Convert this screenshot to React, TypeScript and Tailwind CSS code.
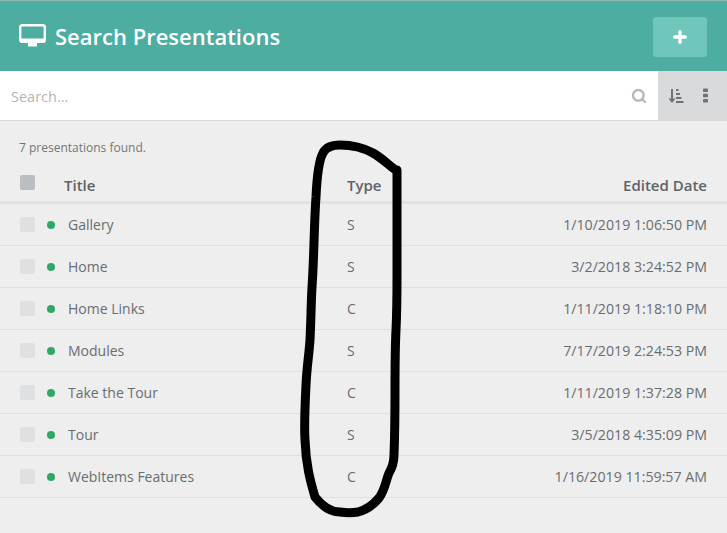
import React from 'react';
import { Plus, Search } from 'lucide-react';

const rows = [
  { title: 'Gallery', type: 'S', date: '1/10/2019 1:06:50 PM' },
  { title: 'Home', type: 'S', date: '3/2/2018 3:24:52 PM' },
  { title: 'Home Links', type: 'C', date: '1/11/2019 1:18:10 PM' },
  { title: 'Modules', type: 'S', date: '7/17/2019 2:24:53 PM' },
  { title: 'Take the Tour', type: 'C', date: '1/11/2019 1:37:28 PM' },
  { title: 'Tour', type: 'S', date: '3/5/2018 4:35:09 PM' },
  { title: 'WebItems Features', type: 'C', date: '1/16/2019 11:59:57 AM' },
];

const App: React.FC = () => {
  return (
    <div className="relative w-[727px] h-[533px] overflow-hidden bg-[#eeeeee] font-['Open_Sans',sans-serif] text-[#666a6d]">
      {/* Header */}
      <div className="h-[71px] bg-[#4cada0] border-t border-[#8fb5b0] flex items-center justify-between pl-[19px] pr-[20px]">
        <div className="flex items-center gap-[10px] text-white">
          <svg width="27" height="24" viewBox="0 0 27 24" fill="none">
            <rect x="1.2" y="1.2" width="24.6" height="16.6" rx="2" stroke="white" strokeWidth="2.4" />
            <rect x="1" y="14.5" width="25" height="4.5" rx="1.5" fill="white" />
            <rect x="9" y="19" width="9" height="3.5" fill="white" />
          </svg>
          <h1 className="text-[22px] font-semibold leading-none ml-[-1px]">Search Presentations</h1>
        </div>
        <button className="w-[54px] h-[40px] rounded-[3px] bg-[#70c6ba] flex items-center justify-center text-white mt-[1px]">
          <Plus size={18} strokeWidth={4.5} />
        </button>
      </div>

      {/* Search bar */}
      <div className="h-[50px] flex bg-white border-b border-[#d8d8d8]">
        <div className="flex-1 flex items-center justify-between pl-[11px] pr-[11px]">
          <span className="text-[14.5px] text-[#b5b5b5] mt-[2px]">Search...</span>
          <Search size={16} strokeWidth={3.5} className="text-[#b8b8b8] mt-[1px]" />
        </div>
        <div className="w-[69px] bg-[#d9dadb] flex items-center gap-[19px] pl-[10px] text-[#6f7274]">
          <svg width="16" height="16" viewBox="0 0 16 16" fill="currentColor">
            <rect x="3" y="1" width="2" height="12" />
            <path d="M0.5 10.5 H7.5 L4 15 Z" />
            <rect x="8" y="1" width="2.5" height="2" />
            <rect x="8" y="5" width="4" height="2" />
            <rect x="8" y="9" width="5.5" height="2" />
            <rect x="8" y="13" width="7.5" height="2" />
          </svg>
          <svg width="5" height="15" viewBox="0 0 5 15" fill="currentColor">
            <rect x="0" y="0.5" width="5" height="3.6" rx="0.8" />
            <rect x="0" y="5.7" width="5" height="3.6" rx="0.8" />
            <rect x="0" y="10.9" width="5" height="3.6" rx="0.8" />
          </svg>
        </div>
      </div>

      {/* Results */}
      <div className="px-[19px] pt-[19px] text-[12px] leading-[16px] text-[#73777a]">7 presentations found.</div>

      <div className="mt-[8px]">
        <div className="flex items-center h-[40px] pl-[20px] pr-[20px] border-b-[3px] border-[#e2e2e2] text-[15px] font-semibold text-[#5f6366]">
          <span className="w-[15px] h-[15px] rounded-[2px] bg-[#b9bec2]" />
          <span className="ml-[29px] w-[283px] mt-[5px]">Title</span>
          <span className="flex-1 mt-[5px]">Type</span>
          <span className="mt-[5px]">Edited Date</span>
        </div>
        {rows.map(r => (
          <div key={r.title} className="flex items-center h-[42px] pl-[20px] pr-[20px] border-b border-[#dfdfdf] text-[14px] text-[#696d70]">
            <span className="w-[15px] h-[15px] rounded-[2px] bg-[#dfe0e2]" />
            <span className="ml-[12px] w-[8px] h-[8px] rounded-full bg-[#2fa866]" />
            <span className="ml-[13px] w-[279px]">{r.title}</span>
            <span className="flex-1">{r.type}</span>
            <span className="text-[14.2px]">{r.date}</span>
          </div>
        ))}
      </div>

      {/* Hand-drawn annotation */}
      <svg className="absolute left-0 top-0 pointer-events-none" width="727" height="533" fill="none">
        <path
          d="M396 170 C390 167 385 160 373 153 C362 147 350 145 340 145 C332 145 326 147 323 153 C319 160 317 175 316 197 C314 225 314 260 312 287 C311 305 311 320 310 340 C309 355 307 365 306 385 C305 405 304 425 305 440 C306 465 310 480 315 497 C322 506 330 512 340 512 C347 513 352 513 358 512 C366 510 374 504 379 498 C385 490 386 480 389 473 C392 468 394 464 394 455 C395 430 395 410 395 390 C395 370 395 350 396 330 C397 310 397 295 397 275 C397 240 397 205 397 170"
          stroke="#000"
          strokeWidth="9"
          strokeLinecap="round"
          strokeLinejoin="round"
        />
      </svg>
    </div>
  );
};

export default App;
